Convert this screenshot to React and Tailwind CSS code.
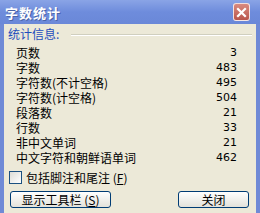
import React from 'react';

const rows = [
    ['页数', '3'],
    ['字数', '483'],
    ['字符数(不计空格)', '495'],
    ['字符数(计空格)', '504'],
    ['段落数', '21'],
    ['行数', '33'],
    ['非中文单词', '21'],
    ['中文字符和朝鲜语单词', '462'],
];

const font = { fontFamily: '"Noto Sans CJK SC", "Liberation Sans", sans-serif' };

const App = () => {
    return (
        <div className="w-[260px] h-[213px] flex flex-col bg-[#6f8ad6] overflow-hidden" style={font}>
            {/* title bar */}
            <div className="h-[24px] flex items-center justify-between pl-[5px] pr-[10px] bg-gradient-to-b from-[#8aa4e6] via-[#6e8cdc] to-[#6a88d8]">
                <span className="text-white text-[13px] font-bold leading-none tracking-[1px] [text-shadow:1px_1px_0_#4a63a8]">字数统计</span>
                <div className="w-[17px] h-[18px] rounded-[3px] border border-white/80 bg-gradient-to-b from-[#d98a80] to-[#b8554c] flex items-center justify-center">
                    <svg width="11" height="11" viewBox="0 0 11 11">
                        <path d="M2 2 L9 9 M9 2 L2 9" stroke="white" strokeWidth="2.2" strokeLinecap="square" />
                    </svg>
                </div>
            </div>

            {/* body */}
            <div className="flex-1 mx-[4px] bg-[#ece9d8] flex flex-col text-black text-[12px]">
                <div className="flex items-center pl-[4px] pr-[4px] pt-[3px] h-[17px]">
                    <span className="text-[#1f4dbd] leading-[14px]">统计信息:</span>
                    <div className="flex-1 ml-[12px] mt-[2px] border-t border-[#d0cfbf] border-b border-b-white" />
                </div>

                <div className="flex flex-col mt-[4px] pl-[12px] pr-[19px]">
                    {rows.map(([label, value]) => (
                        <div key={label} className="flex justify-between items-center h-[15px] leading-[12px]">
                            <span>{label}</span>
                            <span style={{ fontFamily: '"DejaVu Sans", "Liberation Sans", sans-serif' }} className="text-[11px]">{value}</span>
                        </div>
                    ))}
                </div>

                <div className="flex items-center gap-[4px] mt-[6px] pl-[5px] h-[13px]">
                    <div className="w-[13px] h-[13px] border border-[#1c5180] bg-gradient-to-br from-[#dcdcd6] to-white" />
                    <span className="leading-none">包括脚注和尾注 (<span className="underline">F</span>)</span>
                </div>

                <div className="flex justify-between mt-[7px] pl-[6px] pr-[7px]">
                    <button className="w-[101px] h-[17px] rounded-[3px] border border-[#003c74] bg-gradient-to-b from-white to-[#e3e2da] text-[12px] leading-none flex items-center justify-center">
                        显示工具栏 (<span className="underline">S</span>)
                    </button>
                    <button className="w-[71px] h-[17px] rounded-[3px] border border-[#003c74] bg-gradient-to-b from-white to-[#e3e2da] text-[12px] leading-none flex items-center justify-center">
                        关闭
                    </button>
                </div>
            </div>
        </div>
    );
};

export default App;
